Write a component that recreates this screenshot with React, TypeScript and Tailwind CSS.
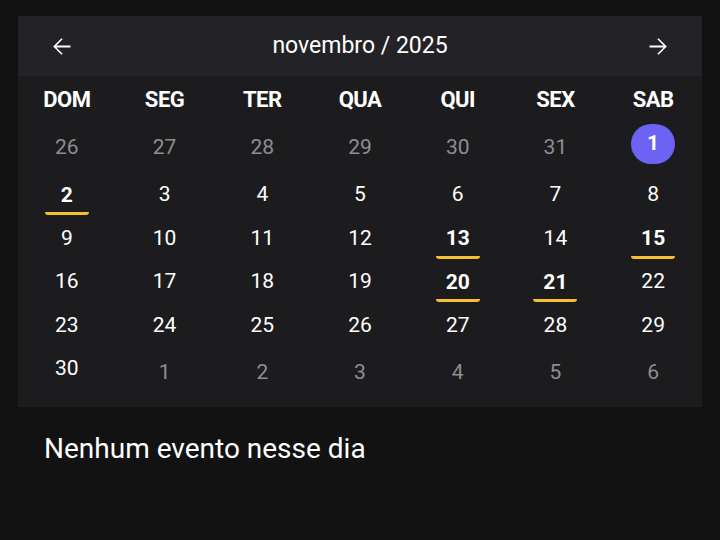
import React from "react";

type Cell = { d: number; cur: boolean; sel?: boolean; ev?: boolean };

const rows: Cell[][] = [
  [26, 27, 28, 29, 30, 31].map((d) => ({ d, cur: false } as Cell)).concat([{ d: 1, cur: true, sel: true }]),
  [2, 3, 4, 5, 6, 7, 8].map((d) => ({ d, cur: true, ev: d === 2 })),
  [9, 10, 11, 12, 13, 14, 15].map((d) => ({ d, cur: true, ev: d === 13 || d === 15 })),
  [16, 17, 18, 19, 20, 21, 22].map((d) => ({ d, cur: true, ev: d === 20 || d === 21 })),
  [23, 24, 25, 26, 27, 28, 29].map((d) => ({ d, cur: true })),
  [{ d: 30, cur: true } as Cell].concat([1, 2, 3, 4, 5, 6].map((d) => ({ d, cur: false }))),
];

const heads = ["DOM", "SEG", "TER", "QUA", "QUI", "SEX", "SAB"];

function Arrow({ dir }: { dir: "l" | "r" }) {
  return (
    <svg width="27" height="27" viewBox="0 0 24 24" fill="currentColor">
      {dir === "l" ? (
        <path d="M20 11.2H7.5l5.5-5.6L12 4.6 4.6 12l7.4 7.4 1-1L7.5 12.8H20v-1.6z" />
      ) : (
        <path d="M12 4.6l-1 1 5.5 5.6H4v1.6h12.5L11 18.4l1 1 7.4-7.4z" />
      )}
    </svg>
  );
}

function DayCell({ c }: { c: Cell }) {
  if (!c.cur) {
    return (
      <div className="flex items-center justify-center pt-[8px] text-[21px] text-[#8e8e93]">
        {c.d}
      </div>
    );
  }
  if (c.sel) {
    return (
      <div className="flex items-center justify-center">
        <div className="flex h-[40px] w-[44px] items-center justify-center rounded-full bg-[#6c63f2] text-[21px] font-bold text-white">
          {c.d}
        </div>
      </div>
    );
  }
  return (
    <div className="flex items-center justify-center">
      <div
        className={
          c.ev
            ? "flex h-[41px] w-[44px] items-center justify-center rounded-[3px] border-b-[3px] border-[#f4bf30] pt-[4px] text-[21px] font-bold text-white"
            : "flex h-[40px] w-[44px] items-center justify-center text-[21px] text-white"
        }
      >
        {c.d}
      </div>
    </div>
  );
}

export default function App() {
  return (
    <div
      className="min-h-[540px] w-full bg-[#121212] pt-[16px]"
      style={{ fontFamily: "Roboto, 'Noto Sans', sans-serif" }}
    >
      <div className="mx-[18px] bg-[#1c1c1e] pb-[16px]">
        <div className="flex h-[60px] items-center justify-between bg-[#232327] px-[30px] text-white">
          <Arrow dir="l" />
          <div className="text-[23px] text-white">novembro / 2025</div>
          <Arrow dir="r" />
        </div>
        <div className="grid grid-cols-7">
          {heads.map((h) => (
            <div
              key={h}
              className="flex h-[47px] items-center justify-center text-[22px] font-bold tracking-[-0.5px] text-white"
            >
              {h}
            </div>
          ))}
        </div>
        {rows.map((r, i) => (
          <div
            key={i}
            className={
              i === 0
                ? "grid h-[50px] grid-cols-7 items-start pt-[1px]"
                : "grid h-[43.5px] grid-cols-7 items-center"
            }
          >
            {r.map((c, j) => (
              <DayCell key={j} c={c} />
            ))}
          </div>
        ))}
      </div>
      <div className="px-[44px] pt-[21px] text-[28px] text-white">Nenhum evento nesse dia</div>
    </div>
  );
}
